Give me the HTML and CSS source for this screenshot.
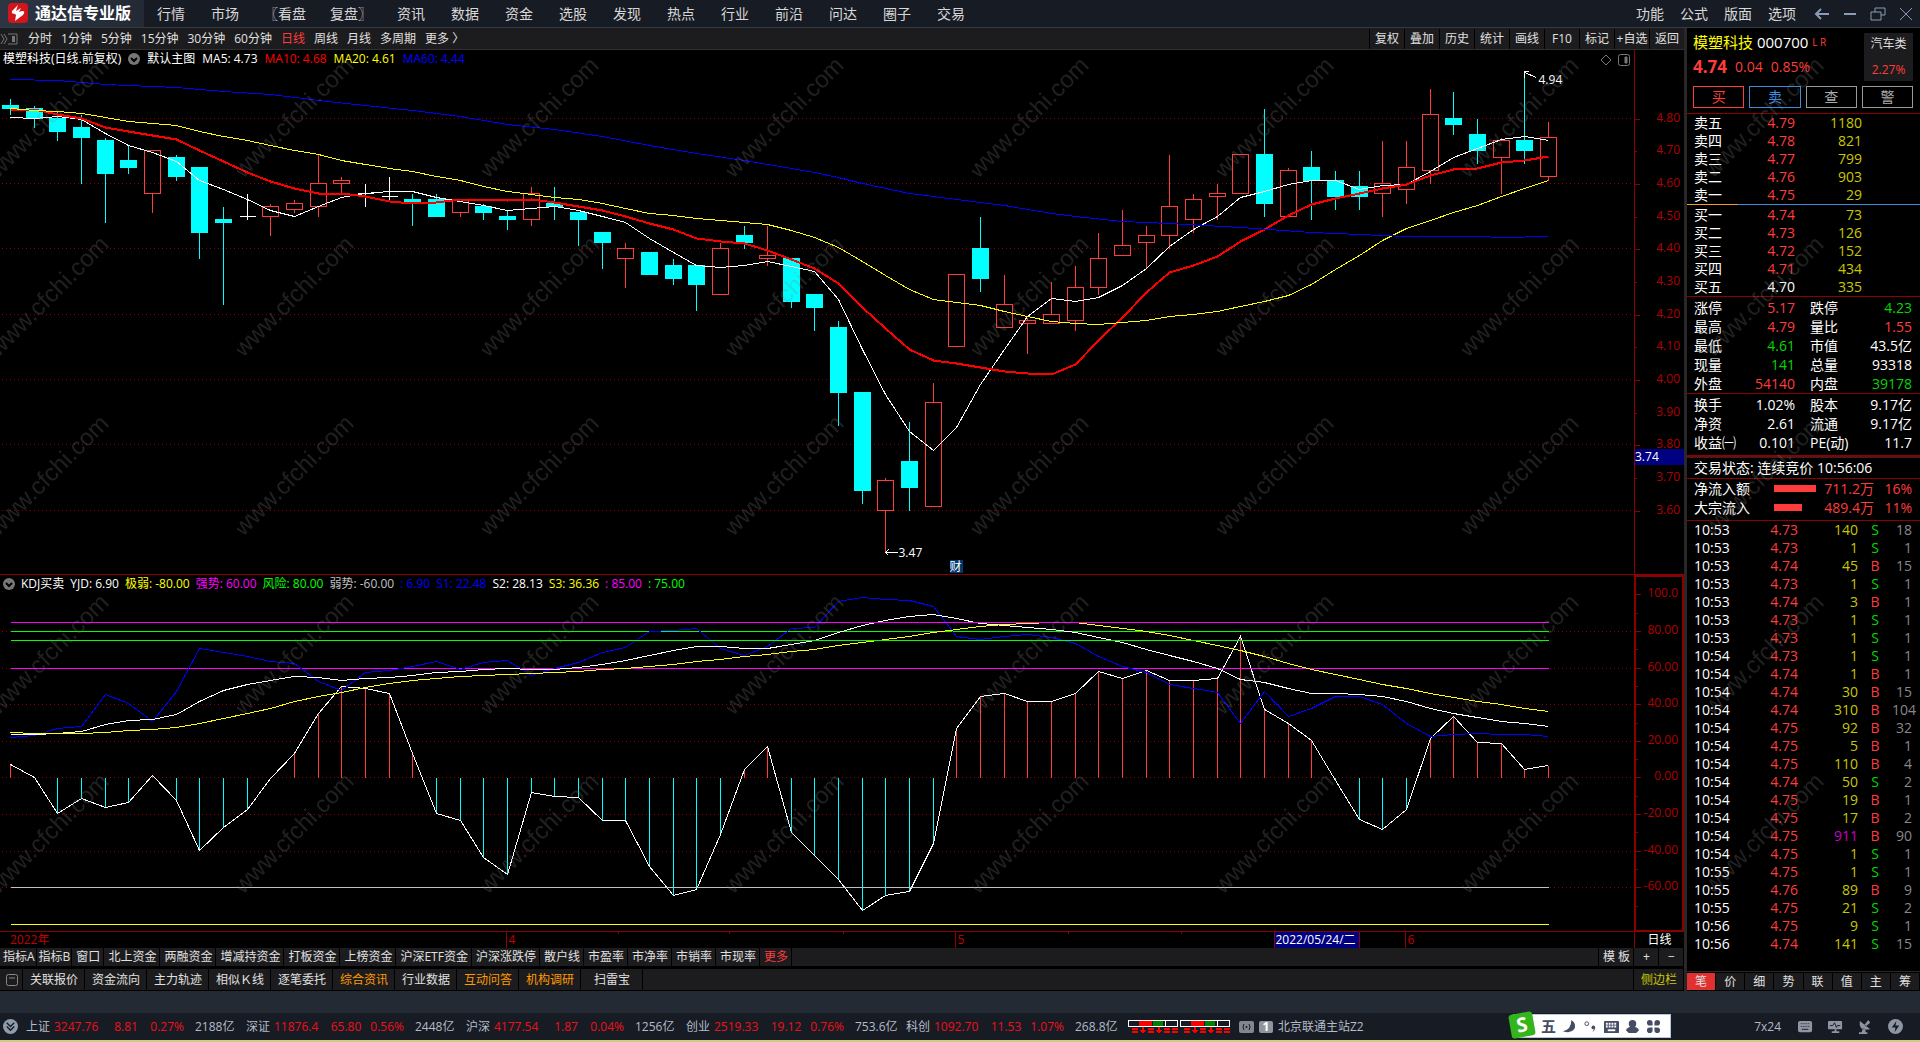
FILE: index.html
```html
<!DOCTYPE html>
<html lang="zh-CN">
  <head>
    <meta charset="utf-8">
    <title>通达信专业版</title>
    <link rel="stylesheet" href="styles.css">
  </head>
  <body>
	<header class="topbar">
		<div class="brand">
			<svg class="logo" viewBox="0 0 20 20">
				<rect width="20" height="20" rx="4" fill="#d3141b"/>
				<path d="M10 2L4 8Q3 11 7 11L8 12L7 18L15 12Q18 8 14 8L11 9L13 5L8 8Z" fill="#fff"/>
			</svg>
			<h1>通达信专业版</h1>
		</div>
		<nav class="menu">
			<button>行情</button>
			<button>市场</button>
			<button class="wide">〖看盘</button>
			<button class="wide">复盘〗</button>
			<button>资讯</button>
			<button>数据</button>
			<button>资金</button>
			<button>选股</button>
			<button>发现</button>
			<button>热点</button>
			<button>行业</button>
			<button>前沿</button>
			<button>问达</button>
			<button>圈子</button>
			<button>交易</button>
		</nav>
		<nav class="menu system">
			<button>功能</button>
			<button>公式</button>
			<button>版面</button>
			<button>选项</button>
		</nav>
		<div class="window-keys">
			<button aria-label="后退"><svg viewBox="0 0 16 14"><path d="M15 7H2M7 2L2 7L7 12"/></svg></button>
			<button aria-label="最小化"><svg viewBox="0 0 16 14"><path d="M2 7H14"/></svg></button>
			<button aria-label="还原"><svg viewBox="0 0 16 14"><path d="M5 5V1H15V8H11M1 5H11V13H1Z"/></svg></button>
			<button aria-label="关闭"><svg viewBox="0 0 16 14"><path d="M2 1L14 13M14 1L2 13"/></svg></button>
		</div>
	</header>

	<main class="workspace">
		<section class="charts">
			<div class="toolbar">
				<svg class="fold" viewBox="0 0 18 12"><path d="M1 1L4 6L1 11M4 1L7 6L4 11M8 1H17V11H8" fill="none" stroke="#777"/><path d="M12 3H15V9H12Z" fill="#777"/></svg>
				<div class="periods">
					<button>分时</button>
					<button>1分钟</button>
					<button>5分钟</button>
					<button>15分钟</button>
					<button>30分钟</button>
					<button>60分钟</button>
					<button class="active">日线</button>
					<button>周线</button>
					<button>月线</button>
					<button>多周期</button>
					<button>更多 〉</button>
				</div>
				<div class="tools">
					<button>复权</button>
					<button>叠加</button>
					<button>历史</button>
					<button>统计</button>
					<button>画线</button>
					<button>F10</button>
					<button>标记</button>
					<button>+自选</button>
					<button>返回</button>
				</div>
			</div>

			<div class="panel main-panel">
				<svg class="plot" id="kline"></svg>
				<div class="legend">
					<span>模塑科技(日线.前复权)</span>
					<svg class="drop" viewBox="0 0 12 12"><circle cx="6" cy="6" r="6"/><path d="M3 5L6 8L9 5"/></svg>
					<span>默认主图</span>
					<span>MA5: 4.73</span>
					<span class="red">MA10: 4.68</span>
					<span class="yellow">MA20: 4.61</span>
					<span class="blue">MA60: 4.44</span>
				</div>
				<svg class="corner" viewBox="0 0 30 12"><path d="M6 1L11 6L6 11L1 6Z"/><rect x="18.5" y=".5" width="11" height="11" rx="2"/><path d="M25 3H27V9H25Z" fill="#777"/></svg>
				<div class="axis" id="price-axis"></div>
			</div>

			<div class="panel sub-panel">
				<svg class="plot" id="kdj"></svg>
				<div class="legend">
					<svg class="drop" viewBox="0 0 12 12"><circle cx="6" cy="6" r="6"/><path d="M3 5L6 8L9 5"/></svg>
					<span>KDJ买卖</span>
					<span>YJD: 6.90</span>
					<span class="yellow">极弱: -80.00</span>
					<span class="magenta">强势: 60.00</span>
					<span class="green">风险: 80.00</span>
					<span class="grey">弱势: -60.00</span>
					<span class="blue">: 6.90</span>
					<span class="blue">S1: 22.48</span>
					<span>S2: 28.13</span>
					<span class="yellow">S3: 36.36</span>
					<span class="magenta">: 85.00</span>
					<span class="green">: 75.00</span>
				</div>
				<div class="axis boxed" id="kdj-axis"></div>
			</div>

			<div class="dates">
				<svg class="plot" id="dates"></svg>
				<div class="period-name">日线</div>
			</div>

			<div class="tabs indicators">
				<button class="tight">指标A</button>
				<button class="tight">指标B</button>
				<button>窗口</button>
				<button>北上资金</button>
				<button>两融资金</button>
				<button>增减持资金</button>
				<button>打板资金</button>
				<button>上榜资金</button>
				<button>沪深ETF资金</button>
				<button>沪深涨跌停</button>
				<button>散户线</button>
				<button>市盈率</button>
				<button>市净率</button>
				<button>市销率</button>
				<button>市现率</button>
				<button class="hot">更多</button>
				<span class="fill"></span>
				<button>模 板</button>
				<button class="zoom-key">+</button>
				<button class="zoom-key">−</button>
			</div>
			<div class="tabs pages">
				<button class="pin" aria-label="收起"><svg viewBox="0 0 12 12"><rect x=".5" y=".5" width="11" height="11" rx="2"/><path d="M3 4H9"/></svg></button>
				<button>关联报价</button>
				<button>资金流向</button>
				<button>主力轨迹</button>
				<button>相似Ｋ线</button>
				<button>逐笔委托</button>
				<button class="orange">综合资讯</button>
				<button>行业数据</button>
				<button class="orange">互动问答</button>
				<button class="orange">机构调研</button>
				<button>扫雷宝</button>
				<span class="fill"></span>
				<button class="side-key">侧边栏</button>
			</div>
		</section>

		<aside class="quote">
			<div class="quote-head">
				<div class="stock">
					<p class="name"><b>模塑科技</b> 000700 <small>L R</small></p>
					<p class="price"><strong>4.74</strong><span>0.04</span><span>0.85%</span></p>
				</div>
				<div class="sector">
					<span>汽车类</span>
					<span class="up">2.27%</span>
				</div>
			</div>
			<div class="orders">
				<button class="buy">买</button>
				<button class="sell">卖</button>
				<button>查</button>
				<button>警</button>
			</div>
			<table class="book asks">
				<tr><td>卖五</td><td class="up">4.79</td><td>1180</td></tr>
				<tr><td>卖四</td><td class="up">4.78</td><td>821</td></tr>
				<tr><td>卖三</td><td class="up">4.77</td><td>799</td></tr>
				<tr><td>卖二</td><td class="up">4.76</td><td>903</td></tr>
				<tr><td>卖一</td><td class="up">4.75</td><td>29</td></tr>
			</table>
			<div class="ratio"><span></span></div>
			<table class="book">
				<tr><td>买一</td><td class="up">4.74</td><td>73</td></tr>
				<tr><td>买二</td><td class="up">4.73</td><td>126</td></tr>
				<tr><td>买三</td><td class="up">4.72</td><td>152</td></tr>
				<tr><td>买四</td><td class="up">4.71</td><td>434</td></tr>
				<tr><td>买五</td><td>4.70</td><td>335</td></tr>
			</table>
			<table class="stats">
				<tr><td>涨停</td><td class="up">5.17</td><td>跌停</td><td class="down">4.23</td></tr>
				<tr><td>最高</td><td class="up">4.79</td><td>量比</td><td class="up">1.55</td></tr>
				<tr><td>最低</td><td class="down">4.61</td><td>市值</td><td>43.5亿</td></tr>
				<tr><td>现量</td><td class="down">141</td><td>总量</td><td>93318</td></tr>
				<tr><td>外盘</td><td class="up">54140</td><td>内盘</td><td class="down">39178</td></tr>
			</table>
			<table class="stats last">
				<tr><td>换手</td><td>1.02%</td><td>股本</td><td>9.17亿</td></tr>
				<tr><td>净资</td><td>2.61</td><td>流通</td><td>9.17亿</td></tr>
				<tr><td>收益㈠</td><td>0.101</td><td>PE(动)</td><td>11.7</td></tr>
			</table>
			<p class="state">交易状态: 连续竞价 10:56:06</p>
			<table class="flows">
				<tr><td>净流入额</td><td><i class="bar" style="width: 42px"></i></td><td>711.2万</td><td>16%</td></tr>
				<tr><td>大宗流入</td><td><i class="bar" style="width: 28px"></i></td><td>489.4万</td><td>11%</td></tr>
			</table>
			<table class="ticks"><tbody id="ticks"></tbody></table>
			<div class="side-tabs">
				<button class="active">笔</button>
				<button>价</button>
				<button>细</button>
				<button>势</button>
				<button>联</button>
				<button>值</button>
				<button>主</button>
				<button>筹</button>
			</div>
		</aside>
		<svg class="watermark">
			<defs>
				<pattern id="mark" width="245" height="179" patternUnits="userSpaceOnUse" x="-8" y="-14">
					<text x="6" y="143" transform="rotate(-45 6 143)">www.cfchi.com</text>
				</pattern>
			</defs>
			<rect width="100%" height="100%" fill="url(#mark)"/>
		</svg>
	</main>

	<footer class="status">
		<svg class="more" viewBox="0 0 16 16"><circle cx="8" cy="8" r="8" fill="#8f9cab"/><path d="M4 4L8 8L12 4M4 8L8 12L12 8" fill="none" stroke="#171b24" stroke-width="1.500"/></svg>
		<div class="index"><span>上证</span><b>3247.76</b><b>8.81</b><b>0.27%</b><span>2188亿</span></div>
		<div class="index"><span>深证</span><b>11876.4</b><b>65.80</b><b>0.56%</b><span>2448亿</span></div>
		<div class="index"><span>沪深</span><b>4177.54</b><b>1.87</b><b>0.04%</b><span>1256亿</span></div>
		<div class="index"><span>创业</span><b>2519.33</b><b>19.12</b><b>0.76%</b><span>753.6亿</span></div>
		<div class="index"><span>科创</span><b>1092.70</b><b>11.53</b><b>1.07%</b><span>268.8亿</span></div>
		<svg class="meters" viewBox="0 0 102 16">
			<defs>
				<g id="meter">
					<path d="M.5 1.500H49.500V7.500H.5ZM37.500 2V7" fill="none" stroke="#fff"/>
					<path d="M11 2H24V7H11Z" fill="#f00"/><path d="M25 2H35V7H25Z" fill="#008000"/>
					<path d="M4 10H10M4 13H10M20 10H26M20 13H26M36 10H42M36 13H42M44 10H50M44 13H50M15 8V12M31 8V12" stroke="#f00" stroke-width="2"/>
					<path d="M12 11H18L15 15ZM28 11H34L31 15Z" fill="#f00"/>
				</g>
			</defs>
			<use href="#meter"/><use href="#meter" x="52"/>
		</svg>
		<svg class="signal" viewBox="0 0 15 12"><rect width="15" height="12" rx="2" fill="#7f8791"/><circle cx="7.500" cy="6" r="1" fill="#171b24"/><path d="M5 3Q3 6 5 9M10 3Q12 6 10 9" fill="none" stroke="#171b24"/></svg>
		<span class="line-no">1</span>
		<span class="host">北京联通主站Z2</span>
		<div class="tray">
			<span>7x24</span>
			<svg viewBox="0 0 16 16"><rect y="2" width="15" height="12" rx="2"/><path d="M3 5H12M3 8H12" stroke-dasharray="1 1"/><path d="M4 11H11"/></svg>
			<svg viewBox="0 0 16 16"><rect y="2" width="15" height="9" rx="1"/><path d="M2 7H5L7 4L9 9L10 7H13"/><path class="solid" d="M7 11H9V13H12V15H4V13H7Z"/></svg>
			<svg viewBox="0 0 16 16"><path class="solid" d="M2 2Q0 13 13 11ZM7 6L11 1L13 4L8 8ZM5 10L8 11V14H10V16H1V14H4Z"/></svg>
			<svg viewBox="0 0 16 16"><circle cx="8" cy="8" r="8"/><path class="bolt" d="M9 2L4 9H8L7 14L12 7H8Z"/></svg>
		</div>
		<div class="ime">
			<svg class="ime-logo" viewBox="0 0 28 28"><rect x="2" y="2" width="24" height="24" rx="3" transform="rotate(-10 14 14)"/><text x="14" y="21" transform="rotate(-10 14 14)">S</text></svg>
			<b>五</b>
			<svg viewBox="0 0 16 16"><path d="M10 1Q16 5 13 11Q9 16 1 13Q10 11 10 1Z"/></svg>
			<svg viewBox="0 0 16 16"><circle cx="4" cy="5" r="2" fill="none" stroke="#454c63"/><circle cx="11" cy="9" r="2"/><path d="M13 9Q13 12 10 14L12 10Z"/></svg>
			<svg viewBox="0 0 16 16"><rect y="2" width="16" height="13" rx="1"/><path d="M2 5H14M2 8H14" fill="none" stroke="#fff" stroke-width="2" stroke-dasharray="2 1"/><path d="M4 11H12V13H4Z" fill="#fff"/></svg>
			<svg viewBox="0 0 16 16"><circle cx="8" cy="5" r="4"/><path d="M1 12Q3 8 8 8Q13 8 15 12L12 15H4Z"/></svg>
			<svg viewBox="0 0 16 16"><path d="M7 7H4A3 3 0 1 1 7 4ZM9 7V4A3 3 0 1 1 12 7ZM7 9V12A3 3 0 1 1 4 9ZM9 9H12A3 3 0 1 1 9 12Z"/></svg>
		</div>
	</footer>
    <script src="charts.js"></script>
  </body>
</html>
```
FILE: styles.css
```css
* {
	box-sizing: border-box;
}

body {
	display: flex;
	flex-direction: column;
	height: 100vh;
	margin: 0;
	overflow: hidden;
	background-color: #232a33;
	color: #fff;
	font: 12px 'Open Sans', 'Noto Sans CJK SC', sans-serif;
}

p, h1 {
	margin: 0;
}

button {
	margin: 0;
	padding: 0;
	border: none;
	background: none;
	color: inherit;
	font: inherit;
	white-space: nowrap;
	cursor: pointer;
}

/* Colors shared by the legends and tables */
.red { color: #f00; }
.yellow { color: #ff0; }
.blue { color: #00f; }
.magenta { color: #f0f; }
.green { color: #0f0; }
.grey { color: #c0c0c0; }
.up { color: #ff3c3c; }
.down { color: #00d800; }

/* Title bar */
.topbar {
	display: flex;
	align-items: stretch;
	height: 28px;
	background-color: #171b24;
	border-bottom: 1px solid #323a46;
}

.brand {
	display: flex;
	align-items: center;
	gap: 7px;
	width: 144px;
	padding-left: 8px;
	padding-bottom: 2px;
	background: linear-gradient(90deg, #2d3542, #232a36);
}

.logo {
	width: 20px;
	height: 20px;
}

.brand h1 {
	font-size: 16px;
	line-height: 24px;
	white-space: nowrap;
}

.menu {
	display: flex;
	font-size: 14px;
	line-height: 27px;
	color: #d8d8d8;
}

.menu button {
	padding: 0 13px;
}

.menu .wide {
	padding: 0 12px;
}

.menu.system {
	margin-left: auto;
}

.menu.system button {
	padding: 0 8px;
}

.window-keys {
	display: flex;
	gap: 12px;
	padding: 0 6px 0 10px;
}

.window-keys svg {
	display: block;
	width: 16px;
	height: 14px;
	fill: none;
	stroke: #8a9bb8;
	stroke-width: 2;
}

.window-keys button:nth-child(n + 3) svg {
	stroke-width: 1;
}

/* Workspace */
.workspace {
	position: relative;
	display: flex;
	flex: 1;
	min-height: 0;
	margin-bottom: 22px;
	background-color: #000;
}

.charts {
	display: flex;
	flex-direction: column;
	flex: 1;
	min-width: 0;
}

.toolbar {
	display: flex;
	align-items: center;
	height: 22px;
	background-color: #1c1c1e;
	border-bottom: 1px solid #303030;
	line-height: 20px;
}

.fold {
	width: 18px;
	height: 12px;
	margin-right: 10px;
}

.periods {
	display: flex;
	gap: 9px;
	flex: 1;
	color: #e0e0e0;
}

.periods .active {
	color: #ff3c3c;
}

.tools {
	display: flex;
	color: #e0e0e0;
}

.tools button {
	width: 35px;
	border-left: 1px solid #000;
}

.panel {
	position: relative;
	display: flex;
	min-height: 0;
	border-bottom: 1px solid #8b0000;
}

.main-panel {
	flex: 525;
}

.sub-panel {
	flex: 357;
}

.plot {
	display: block;
	flex: 1;
	width: 0;
	height: 100%;
	shape-rendering: crispEdges;
}

.legend {
	position: absolute;
	left: 3px;
	top: 0;
	display: flex;
	align-items: center;
	gap: 7px;
	line-height: 18px;
	white-space: nowrap;
}

.sub-panel .legend {
	gap: 6px;
}

.drop {
	width: 12px;
	height: 12px;
	fill: #777;
}

.drop path {
	fill: none;
	stroke: #000;
	stroke-width: 2;
}

.corner {
	position: absolute;
	right: 54px;
	top: 4px;
	width: 30px;
	height: 12px;
	fill: none;
	stroke: #777;
}

.axis {
	position: relative;
	width: 50px;
	border-left: 1px solid #8b0000;
	color: #b00000;
}

.axis.boxed {
	border: 2px solid #8b0000;
	border-bottom-width: 1px;
}

/* Scale labels are centred on their own value */
.axis span {
	position: absolute;
	right: 4px;
	line-height: 16px;
	margin-top: -9px;
}

.axis .cursor {
	left: 0;
	right: 0;
	margin-top: -8px;
	background-color: #000080;
	color: #fff;
}

.axis i {
	position: absolute;
	left: 0;
	width: 5px;
	height: 1px;
	background-color: #8b0000;
}

.axis i.minor {
	width: 2px;
}

.plot text {
	fill: #fff;
}

.dates {
	display: flex;
	height: 16px;
}

.period-name {
	width: 50px;
	border-left: 1px solid #8b0000;
	line-height: 16px;
	text-align: center;
}

/* Bottom tabs */
.tabs {
	display: flex;
	background-color: #1c1c1e;
	color: #e0e0e0;
}

.tabs button {
	padding: 0 3px 0 4px;
	border-right: 1px solid #000;
}

.tabs .fill {
	flex: 1;
	border-right: 1px solid #000;
}

.indicators {
	height: 18px;
	line-height: 18px;
	padding-left: 1px;
}

.indicators .tight {
	padding: 0 1px 0 2px;
}

.indicators .hot {
	color: #ff3c3c;
}

.indicators .zoom-key {
	width: 25px;
}

.pages {
	height: 25px;
	border-top: 3px solid #000;
	border-bottom: 1px solid #000;
	line-height: 21px;
}

.pages button {
	min-width: 62px;
}

.pages .pin {
	min-width: 23px;
}

.pin svg {
	display: block;
	width: 12px;
	height: 12px;
	margin: 0 auto;
	fill: none;
	stroke: #888;
}

.pages .orange {
	color: #ff9a00;
}

.pages .side-key {
	min-width: 50px;
	color: #c8c800;
}

/* Quote panel */
.quote {
	display: flex;
	flex-direction: column;
	width: 236px;
	border-left: 3px solid #282828;
	font-size: 14px;
}

.quote-head {
	display: flex;
	padding: 5px 7px 0 6px;
}

.stock {
	flex: 1;
}

.name {
	font-size: 15px;
	line-height: 18px;
	white-space: nowrap;
}

.name b {
	color: #ff0;
	font-weight: normal;
}

.name small {
	color: #ff3c3c;
	font-size: 10px;
	vertical-align: 2px;
}

.price {
	display: flex;
	gap: 8px;
	padding-top: 6px;
	color: #ff3c3c;
	line-height: 20px;
}

.price strong {
	font-size: 17px;
}

.sector {
	display: flex;
	flex-direction: column;
	justify-content: space-between;
	width: 49px;
	height: 48px;
	padding: 2px 0;
	background-color: #1c1c1e;
	color: #ddd;
	font-size: 12px;
	line-height: 18px;
	text-align: center;
}

.sector .up {
	color: #ff3c3c;
}

.orders {
	display: flex;
	gap: 5px;
	padding: 5px 7px 5px 6px;
}

.orders button {
	flex: 1;
	height: 22px;
	border: 1px solid #999;
	color: #aaa;
	line-height: 18px;
}

.orders .buy {
	border-color: #ff3c3c;
	color: #ff3c3c;
}

.orders .sell {
	border-color: #3c8ce0;
	color: #3c8ce0;
}

.quote table {
	width: 100%;
	table-layout: fixed;
	border-collapse: separate;
	border-spacing: 0;
	line-height: 18px;
}

.quote td {
	padding: 0;
	text-align: right;
	white-space: nowrap;
}

.quote td:first-child {
	width: 60px;
	padding-left: 7px;
	text-align: left;
}

.asks, .stats, .flows, .ticks {
	border-top: 1px solid #8b0000;
}

.book td:nth-child(2) {
	width: 48px;
}

.book td:nth-child(3) {
	padding-right: 58px;
	color: #c8c800;
}

.ratio {
	height: 1px;
	margin-bottom: 1px;
	background-color: #3c8ce0;
}

.ratio span {
	display: block;
	width: 22%;
	height: 1px;
	background-color: #f0a020;
}

.quote .stats {
	padding-top: 1px;
	line-height: 19px;
}

.stats td:nth-child(2) {
	width: 48px;
}

.stats td:nth-child(3) {
	width: 64px;
	padding-left: 15px;
	text-align: left;
}

.stats td:last-child, .flows td:last-child, .ticks td:last-child {
	padding-right: 8px;
}

.quote .last {
	padding-bottom: 3px;
	border-bottom: 2px solid #8b0000;
}

.state {
	padding-left: 7px;
	border-top: 1px solid #282828;
	line-height: 20px;
}

.quote .flows {
	padding-bottom: 3px;
	color: #ff3c3c;
	line-height: 19px;
}

.flows td:first-child {
	width: 87px;
	color: #fff;
}

.flows td:nth-child(2) {
	width: 42px;
	text-align: left;
}

.flows td:nth-child(3) {
	width: 58px;
}

.flows .bar {
	display: block;
	height: 7px;
	background-color: #ff3c3c;
}

.ticks td:nth-child(2) {
	width: 51px;
}

.ticks td:nth-child(3) {
	width: 60px;
	color: #c8c800;
}

.ticks td:nth-child(3).large {
	color: #c800c8;
}

.ticks td:nth-child(4) {
	width: 34px;
	text-align: center;
}

.ticks td:last-child {
	color: #888;
}

.side-tabs {
	display: flex;
	margin-top: auto;
	border-top: 1px solid #282828;
	border-bottom: 1px solid #000;
	line-height: 17px;
}

.side-tabs button {
	flex: 1;
	margin: 1px 1px 0 0;
	background-color: #1c1c1e;
	color: #e0e0e0;
	font-size: 12px;
}

.side-tabs .active {
	background-color: #e03030;
}

.watermark {
	position: absolute;
	left: 0;
	top: 22px;
	width: 100%;
	height: 860px;
	pointer-events: none;
}

.watermark text {
	fill: #808080;
	fill-opacity: 0.25;
	font: 24px 'Liberation Sans', sans-serif;
}

/* Status bar */
.status {
	position: relative;
	display: flex;
	align-items: center;
	height: 29px;
	padding-left: 3px;
	background-color: #171b24;
	border-bottom: 2px solid #cccc86;
	color: #b4bcc8;
	line-height: 20px;
	white-space: nowrap;
}

.more {
	width: 15px;
	height: 15px;
	margin-right: 8px;
}

.index {
	display: grid;
	grid-template-columns: 28px 54px 36px 40px 62px;
}

.index b {
	color: #f01018;
	font-weight: normal;
}

.index b:nth-child(3) {
	text-align: center;
}

.index b:nth-child(4) {
	text-align: right;
}

.index span:last-child {
	padding-left: 11px;
}

.meters {
	width: 102px;
	height: 16px;
	margin: 0 9px 0 2px;
	shape-rendering: crispEdges;
}

.signal {
	width: 15px;
	height: 12px;
	margin-right: 5px;
}

.line-no {
	width: 14px;
	margin-right: 5px;
	border-radius: 2px;
	background-color: #8f959d;
	color: #fff;
	font-weight: bold;
	line-height: 12px;
	text-align: center;
}

.tray {
	display: flex;
	align-items: center;
	gap: 15px;
	margin-left: auto;
	padding-right: 17px;
}

.tray span {
	margin-right: 2px;
}

.tray svg {
	width: 15px;
	height: 15px;
	fill: #8f96a3;
	stroke: none;
}

.tray path {
	fill: none;
	stroke: #171b24;
}

.tray .solid {
	fill: #8f96a3;
	stroke: none;
}

.tray .bolt {
	fill: #171b24;
	stroke: none;
}

/* Input method bar floats over the status bar */
.ime {
	position: absolute;
	right: 249px;
	top: 1px;
	display: flex;
	align-items: center;
	gap: 6px;
	width: 158px;
	height: 24px;
	padding-left: 27px;
	border: 1px solid #b8c8d8;
	background-color: #fff;
	color: #454c63;
	font-size: 15px;
}

.ime svg {
	width: 15px;
	height: 15px;
	fill: #454c63;
}

.ime .ime-logo {
	position: absolute;
	left: -6px;
	top: -4px;
	width: 28px;
	height: 28px;
	overflow: visible;
	fill: #35b51c;
}

.ime-logo text {
	fill: #fff;
	font: bold 20px 'Open Sans', sans-serif;
	text-anchor: middle;
}
```
FILE: charts.js
```js
// open, close, high, low for every day
const candles = [
	[4.84, 4.83, 4.86, 4.81], [4.83, 4.80, 4.84, 4.77], [4.80, 4.76, 4.82, 4.73], [4.77, 4.74, 4.81, 4.60],
	[4.73, 4.63, 4.74, 4.48], [4.67, 4.65, 4.72, 4.63], [4.57, 4.70, 4.70, 4.51], [4.68, 4.62, 4.69, 4.61],
	[4.65, 4.45, 4.65, 4.37], [4.49, 4.48, 4.53, 4.23], [4.50, 4.50, 4.57, 4.49], [4.50, 4.53, 4.54, 4.44],
	[4.52, 4.54, 4.55, 4.51], [4.53, 4.60, 4.69, 4.50], [4.60, 4.61, 4.62, 4.57], [4.57, 4.57, 4.60, 4.53],
	[4.56, 4.56, 4.62, 4.55], [4.55, 4.54, 4.57, 4.47], [4.55, 4.50, 4.57, 4.50], [4.51, 4.55, 4.55, 4.50],
	[4.53, 4.51, 4.54, 4.49], [4.50, 4.49, 4.52, 4.46], [4.49, 4.57, 4.59, 4.47], [4.54, 4.53, 4.59, 4.49],
	[4.51, 4.49, 4.51, 4.41], [4.45, 4.42, 4.45, 4.34], [4.37, 4.40, 4.42, 4.28], [4.39, 4.32, 4.39, 4.32],
	[4.35, 4.31, 4.37, 4.29], [4.35, 4.29, 4.35, 4.21], [4.26, 4.40, 4.42, 4.26], [4.44, 4.42, 4.47, 4.40],
	[4.37, 4.38, 4.47, 4.35], [4.37, 4.24, 4.37, 4.22], [4.26, 4.22, 4.26, 4.15], [4.16, 3.96, 4.18, 3.86],
	[3.96, 3.66, 3.96, 3.62], [3.60, 3.69, 3.70, 3.47], [3.75, 3.67, 3.87, 3.60], [3.61, 3.93, 3.99, 3.61],
	[4.10, 4.32, 4.32, 4.10], [4.40, 4.31, 4.50, 4.27], [4.16, 4.23, 4.32, 4.16], [4.17, 4.18, 4.19, 4.08],
	[4.17, 4.20, 4.30, 4.17], [4.18, 4.28, 4.35, 4.15], [4.28, 4.37, 4.45, 4.26], [4.38, 4.41, 4.52, 4.38],
	[4.42, 4.44, 4.47, 4.34], [4.44, 4.53, 4.69, 4.40], [4.49, 4.55, 4.57, 4.45], [4.56, 4.57, 4.60, 4.49],
	[4.57, 4.69, 4.69, 4.57], [4.69, 4.54, 4.83, 4.50], [4.50, 4.64, 4.65, 4.50], [4.65, 4.61, 4.70, 4.49],
	[4.61, 4.56, 4.64, 4.52], [4.59, 4.56, 4.64, 4.52], [4.57, 4.60, 4.73, 4.50], [4.58, 4.65, 4.73, 4.54],
	[4.64, 4.81, 4.89, 4.60], [4.80, 4.78, 4.88, 4.75], [4.75, 4.70, 4.80, 4.66], [4.68, 4.73, 4.74, 4.57],
	[4.73, 4.70, 4.94, 4.66], [4.62, 4.74, 4.79, 4.61]
];

// averages for the days before there is enough history
const ma5Start = [4.803, 4.80, 4.806, 4.795];
const ma10Start = [4.827, 4.827, 4.81, 4.799, 4.771, 4.76, 4.748, 4.736, 4.702];
const ma20Start = [4.829, 4.824, 4.82, 4.814, 4.803, 4.791, 4.784, 4.776, 4.76, 4.745, 4.73, 4.717, 4.70, 4.688, 4.671, 4.659, 4.647, 4.638, 4.622];
const ma60 = [
	[0, 4.919], [2, 4.914], [4, 4.904], [6, 4.898], [7, 4.895], [9, 4.883], [11, 4.872], [13, 4.855], [15, 4.839],
	[17, 4.822], [19, 4.804], [21, 4.782], [23, 4.765], [25, 4.743], [27, 4.716], [29, 4.693], [31, 4.671], [33, 4.647],
	[34, 4.635], [35, 4.618], [36, 4.601], [38, 4.57], [39, 4.559], [40, 4.551], [42, 4.533], [44, 4.509], [45, 4.5],
	[47, 4.485], [49, 4.476], [52, 4.465], [55, 4.451], [57, 4.445], [59, 4.439], [62, 4.439], [63, 4.436], [65, 4.439]
];

const yjd = [7.1, 0, -19.4, -11.2, -16.1, -13.4, 1.1, -12.3, -39.5, -27, -17.2, -0.4, 13.2, 35, 50, 49.1, 46.2, 13.2, -19.4, -23.2, -43.3, -52.7, -8, -10.1, -10.7, -23.2, -23.2, -48.6, -64.3, -61.2, -30.8, 4.5, 17.4, -29.7, -42.4, -55.3, -72.5, -64.5, -62.3, -35.7, 26.8, 44.7, 46.2, 41.8, 41.8, 46.2, 58.3, 54.5, 58.9, 53.4, 53.4, 54.5, 77.2, 37.5, 30, 20.3, -1.5, -22.6, -28.4, -17.2, 21.7, 33.3, 19.2, 18.7, 4.5, 6.9];
const s1 = [21.9, 23.4, 26.8, 27.9, 45.8, 40.8, 31, 47.3, 70.8, 68.7, 66.5, 63.8, 62.5, 52.9, 48, 57.8, 58.9, 60.9, 63.8, 59.2, 63.2, 64.3, 56.2, 60, 63.2, 68.7, 71.4, 79.9, 80.6, 81.5, 70.5, 67, 71.9, 81.5, 82.2, 96.4, 98.4, 97.5, 96.7, 93.7, 77.4, 75.7, 77.4, 78.4, 76.8, 73.6, 66.3, 61, 57.6, 51.3, 49.1, 46.9, 29.5, 47.3, 33.3, 37.7, 44.7, 44.7, 39.9, 29.9, 22.8, 23.6, 24.1, 23.6, 23.6, 22.5];
const s2 = [23.6, 23.6, 24.1, 25.2, 29, 31.5, 31.7, 34.4, 41.8, 47.5, 51.3, 53.4, 55.6, 55.1, 53.4, 54.5, 54.9, 56, 57.6, 58.3, 59.4, 60, 59.4, 59.4, 60.3, 62, 63.9, 67, 69.7, 71.9, 71.9, 70.8, 70.8, 73, 75.2, 79.5, 83.3, 86, 88.2, 89.3, 87.1, 84.4, 83.3, 82.2, 81.2, 79.5, 76.8, 74.1, 70.3, 66.7, 63.4, 60, 54, 52.4, 48.8, 46.4, 46.4, 45.8, 44.7, 41.5, 38.2, 35, 32.8, 31, 29.5, 28.1];
const s3 = [24.6, 24.1, 24.1, 24.1, 24.6, 25.7, 26.3, 27.4, 29.5, 32.2, 35, 38.2, 42, 44.7, 46.9, 49.6, 51.8, 53.4, 54.5, 55.6, 56.2, 56.7, 57.1, 57.6, 58.3, 59.2, 60, 61, 62.1, 63.8, 64.9, 66.5, 67.6, 69.2, 70.3, 72.5, 74.1, 75.5, 77.4, 79.5, 81, 82.8, 83.7, 84.6, 85, 84.8, 83.3, 81.7, 80.1, 77.7, 75, 72.5, 69.7, 66.3, 62.7, 59.4, 56.5, 53.8, 51.3, 49.1, 46.4, 44.2, 42, 40.2, 38.2, 36.4];

const ticks = [
	['10:53', 4.73, 140, 'S', 18], ['10:53', 4.73, 1, 'S', 1], ['10:53', 4.74, 45, 'B', 15], ['10:53', 4.73, 1, 'S', 1],
	['10:53', 4.74, 3, 'B', 1], ['10:53', 4.73, 1, 'S', 1], ['10:53', 4.73, 1, 'S', 1], ['10:54', 4.73, 1, 'S', 1],
	['10:54', 4.74, 1, 'B', 1], ['10:54', 4.74, 30, 'B', 15], ['10:54', 4.74, 310, 'B', 104], ['10:54', 4.75, 92, 'B', 32],
	['10:54', 4.75, 5, 'B', 1], ['10:54', 4.75, 110, 'B', 4], ['10:54', 4.74, 50, 'S', 2], ['10:54', 4.75, 19, 'B', 1],
	['10:54', 4.75, 17, 'B', 2], ['10:54', 4.75, 911, 'B', 90], ['10:54', 4.75, 1, 'S', 1], ['10:55', 4.75, 1, 'S', 1],
	['10:55', 4.76, 89, 'B', 9], ['10:55', 4.75, 21, 'S', 2], ['10:56', 4.75, 9, 'S', 1], ['10:56', 4.74, 141, 'S', 15]
];

const RED = '#ff3c3c';
const CYAN = '#00ffff';
const GRID = '#900000';

function line(x1, y1, x2, y2, color, extra = '') {
	return `<path d="M${x1} ${y1}L${x2} ${y2}" stroke="${color}" fill="none" ${extra}/>`;
}

function text(x, y, color, str) {
	return `<text x="${x}" y="${y}" style="fill:${color}">${str}</text>`;
}

// x of a day, on a half pixel so that thin lines stay sharp
function dayX(i, width) {
	return Math.round(10 + i * (width - 96) / 65) + 0.5;
}

function scale(top, bottom, height) {
	return (v) => Math.round((top - v) / (top - bottom) * height) + 0.5;
}

function curve(points, width, y, color, size = 1) {
	const d = points.map((p) => `${dayX(p[0], width)},${y(p[1])}`).join(' ');
	return `<polyline points="${d}" fill="none" stroke="${color}" stroke-width="${size}"/>`;
}

function indexed(values) {
	return values.map((v, i) => [i, v]);
}

function average(days, start) {
	return candles.map((c, i) => {
		if (i < start.length) return [i, start[i]];
		let sum = 0;
		for (let k = i - days + 1; k <= i; k++) sum += candles[k][1];
		return [i, sum / days];
	});
}

function drawKline() {
	const svg = document.getElementById('kline');
	const w = svg.clientWidth, h = svg.clientHeight;
	const y = scale(5.007, 3.403, h);
	let out = '', labels = '';

	for (let n = 48; n >= 36; n--) {
		const v = n / 10;
		if (n % 2 === 0) out += line(2, y(v), w, y(v), GRID, 'stroke-dasharray="1 3"');
		labels += `<i class="${n % 2 ? 'minor' : ''}" style="top:${y(v)}px"></i><span style="top:${y(v)}px">${v.toFixed(2)}</span>`;
	}
	labels += `<span class="cursor" style="top:${y(3.763)}px">3.74</span>`;

	candles.forEach(([open, close, high, low], i) => {
		const x = dayX(i, w);
		const top = y(Math.max(open, close)), bottom = y(Math.min(open, close));
		if (open === close) {
			out += line(x, y(high), x, y(low), '#fff') + line(x - 8, top, x + 8, top, '#fff');
		} else if (close > open) {
			out += line(x, y(high), x, top, RED) + line(x, bottom, x, y(low), RED);
			out += `<rect x="${x - 8}" y="${top}" width="16" height="${bottom - top}" fill="none" stroke="${RED}"/>`;
		} else {
			out += line(x, y(high), x, y(low), CYAN);
			out += `<rect x="${x - 8.5}" y="${top - 0.5}" width="17" height="${bottom - top + 1}" fill="${CYAN}"/>`;
		}
	});

	out += curve(average(5, ma5Start), w, y, '#fff');
	out += curve(average(10, ma10Start), w, y, '#f00', 2);
	out += curve(average(20, ma20Start), w, y, '#ff0');
	out += curve(ma60, w, y, '#00f');

	// highest and lowest marks
	const hx = dayX(64, w), hy = y(4.94);
	out += line(hx, hy, hx + 12, hy + 5, '#fff') + `<path d="M${hx + 4} ${hy - 1}H${hx}V${hy + 5}" stroke="#fff" fill="none"/>`;
	out += text(hx + 14, hy + 11, '#fff', '4.94');
	const lx = dayX(37, w), ly = y(3.47);
	out += line(lx, ly, lx + 12, ly, '#fff') + `<path d="M${lx + 3} ${ly - 3}L${lx} ${ly}L${lx + 3} ${ly + 3}" stroke="#fff" fill="none"/>`;
	out += text(lx + 13, ly + 4, '#fff', '3.47');

	const fx = dayX(40, w);
	out += `<rect x="${fx - 7}" y="${h - 14}" width="13" height="13" fill="#003a70"/>` + text(fx - 7, h - 3, '#fff', '财');

	svg.innerHTML = out;
	document.getElementById('price-axis').innerHTML = labels;
}

function drawKdj() {
	const svg = document.getElementById('kdj');
	const w = svg.clientWidth, h = svg.clientHeight;
	const y = scale(110.6, -83.9, h);
	const first = dayX(0, w), last = dayX(65, w);
	let out = '', labels = '';

	for (let v = 100; v >= -60; v -= 20) {
		if (v < 100) out += line(2, y(v), w, y(v), GRID, 'stroke-dasharray="1 3"');
		labels += `<i style="top:${y(v) - 2}px"></i><i class="minor" style="top:${y(v - 10) - 2}px"></i>`;
		labels += `<span style="top:${y(v) - 2}px">${v === 100 ? '100.0' : v.toFixed(2)}</span>`;
	}

	yjd.forEach((v, i) => {
		const x = dayX(i, w);
		if (Math.abs(v) > 1) out += line(x, y(0), x, y(v), v > 0 ? RED : CYAN);
	});

	out += curve(indexed(yjd), w, y, '#fff');
	out += line(first, y(-80), last, y(-80), '#ff0');
	out += line(first, y(60), last, y(60), '#f0f');
	out += line(first, y(80), last, y(80), '#0f0');
	out += line(first, y(-60), last, y(-60), '#c0c0c0');
	out += curve(indexed(s1), w, y, '#00f');
	out += curve(indexed(s2), w, y, '#fff');
	out += curve(indexed(s3), w, y, '#ff0');
	out += line(first, y(85), last, y(85), '#f0f');
	out += line(first, y(75), last, y(75), '#0f0');

	svg.innerHTML = out;
	document.getElementById('kdj-axis').innerHTML = labels;
}

function drawDates() {
	const svg = document.getElementById('dates');
	const w = svg.clientWidth;
	let out = text(10, 12, '#c00000', '2022年');
	[[21, 4], [40, 5], [59, 6]].forEach(([i, month]) => {
		const x = dayX(i, w) - 1;
		out += line(x, 0, x, 16, GRID) + text(x + 2, 12, '#c00000', month);
	});
	[25.7, 30.4, 35.2, 44.7, 49.5].forEach((i) => {
		out += line(dayX(i, w), 0, dayX(i, w), 2, GRID);
	});
	const x = dayX(53.4, w);
	out += `<rect x="${x}" y="-1" width="85" height="18" fill="#000080" stroke="${GRID}"/>`;
	out += text(x + 1, 12, '#fff', '2022/05/24/二');
	svg.innerHTML = out;
}

function drawTicks() {
	document.getElementById('ticks').innerHTML = ticks.map(([time, price, volume, side, count]) => `<tr>
		<td>${time}</td><td class="up">${price}</td><td class="${volume > 500 ? 'large' : ''}">${volume}</td>
		<td class="${side === 'B' ? 'up' : 'down'}">${side}</td><td>${count}</td></tr>`).join('');
}

function draw() {
	drawKline();
	drawKdj();
	drawDates();
}

drawTicks();
draw();
window.addEventListener('resize', draw);
```
